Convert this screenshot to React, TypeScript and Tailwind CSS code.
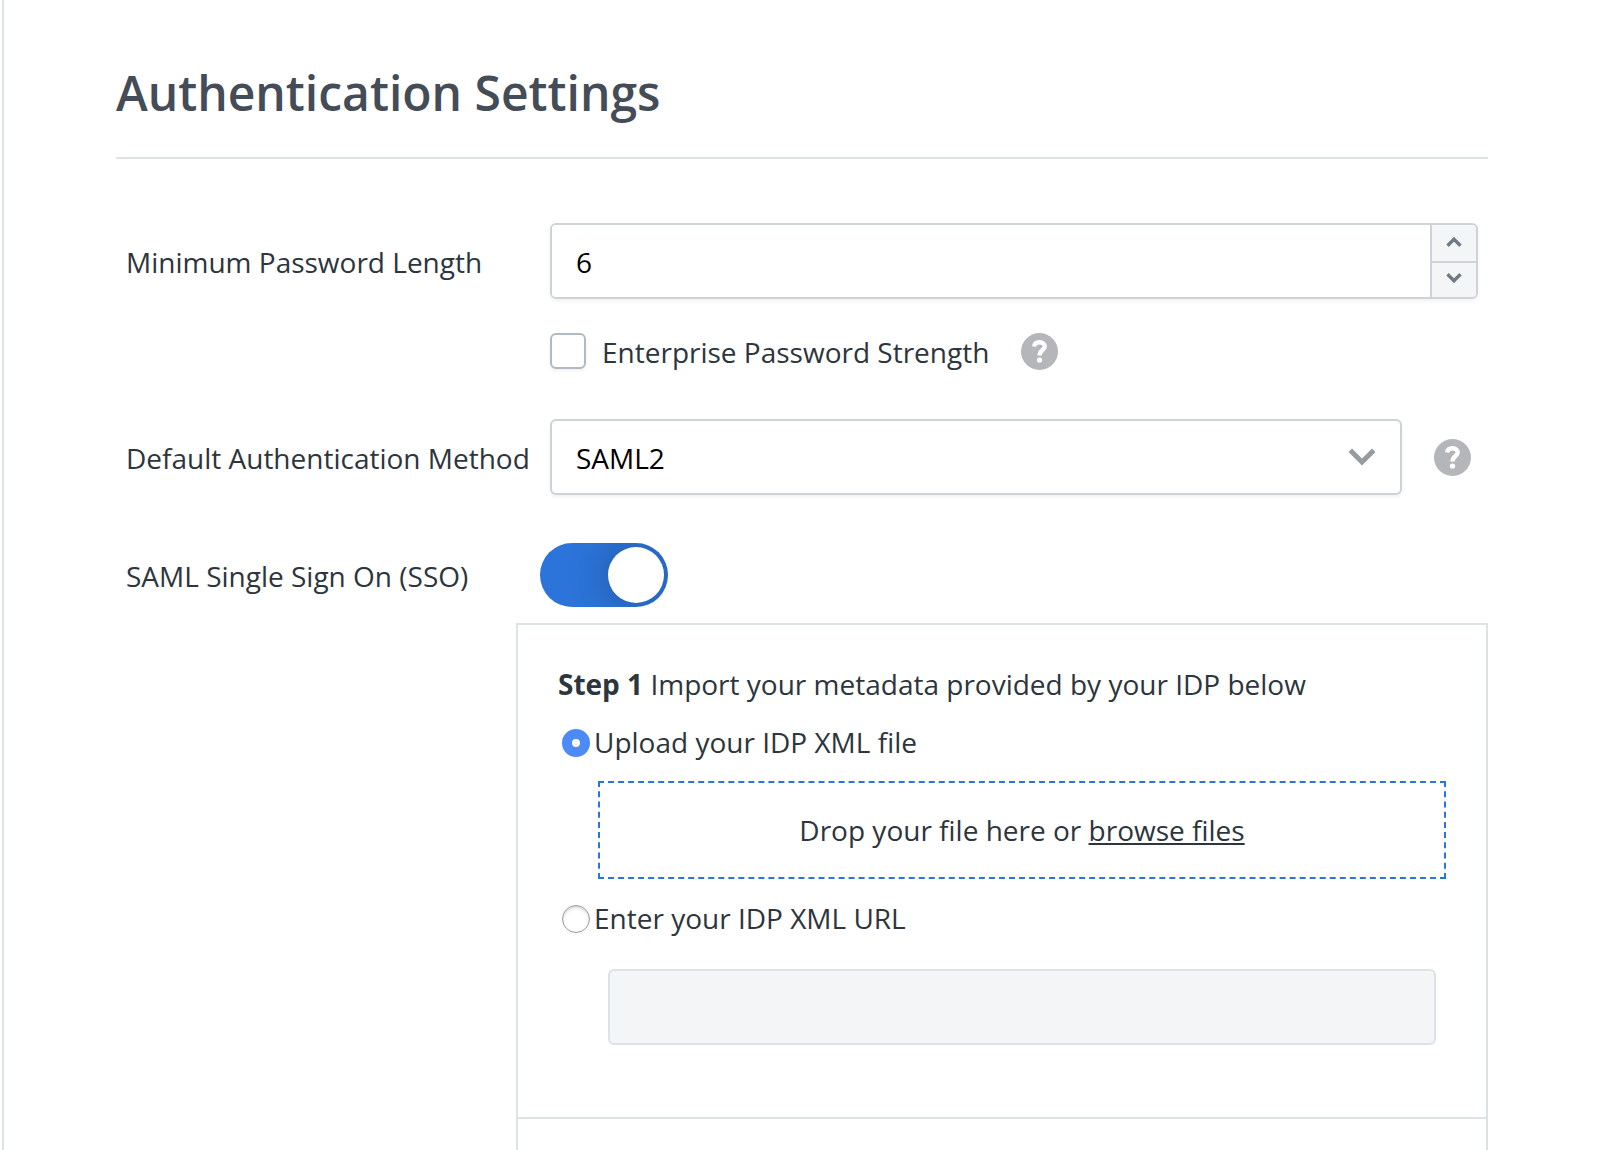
import React, { useState } from 'react';

const HelpButton = ({ label }: { label: string }) => (
  <button type="button" aria-label={label} className="flex w-[52px] shrink-0 justify-center">
    <svg width="37" height="37" viewBox="0 0 37 37" fill="none">
      <circle cx="18.5" cy="18.5" r="18.5" fill="#b5b6ba" />
      <path
        d="M13.2 13.6c.3-2.8 2.5-4.3 5.3-4.3 3 0 5.2 1.6 5.2 4.2 0 3.7-5.1 3.9-5.1 8.9"
        stroke="#fff"
        strokeWidth="4.4"
      />
      <circle cx="18.5" cy="27.1" r="2.7" fill="#fff" />
    </svg>
  </button>
);

const labelClass = 'pt-[2px]';

const radioClass =
  'mt-[2px] ml-1 h-7 w-7 shrink-0 appearance-none rounded-full border border-[#9a9a9a] bg-white shadow-[inset_0_2px_3px_rgba(0,0,0,0.15)] checked:border-[10px] checked:border-[#4c8bf5] checked:shadow-none';

const App = () => {
  const [minLength, setMinLength] = useState(6);
  const [enterprise, setEnterprise] = useState(false);
  const [method, setMethod] = useState('SAML2');
  const [sso, setSso] = useState(true);
  const [source, setSource] = useState('file');

  return (
    <div className="flex min-h-screen bg-white pl-[2px] font-['Open_Sans',sans-serif] text-[28px] leading-10 text-[#2d353d]">
      <main className="flex flex-1 flex-col border-l-2 border-[#dde2e6] px-28 pt-[61px]">
        <h1 className="border-b-2 border-[#dde2e6] pb-8 text-[48px] leading-16 font-semibold text-[#444c57]">
          Authentication Settings
        </h1>

        <div className="mt-16 grid grid-cols-[424px_1fr] items-center px-[10px]">
          <label htmlFor="min-length" className={labelClass}>Minimum Password Length</label>
          <div className="flex h-[76px] overflow-hidden rounded-md border-2 border-[#cdd3d9] shadow-[0_2px_4px_rgba(0,0,0,0.06)]">
            <input
              id="min-length"
              type="text"
              inputMode="numeric"
              value={minLength}
              onChange={(e) => setMinLength(Number(e.target.value) || 0)}
              className="min-w-0 flex-1 bg-white px-6 pt-[2px] text-black outline-none"
            />
            <div className="flex w-[46px] flex-col border-l-2 border-[#cdd3d9] bg-[#f4f5f7] text-[#6f7a84]">
              <button
                type="button"
                aria-label="Increase"
                onClick={() => setMinLength(minLength + 1)}
                className="flex h-[38px] justify-center border-b-2 border-[#cdd3d9] pt-3"
              >
                <svg width="16" height="10" viewBox="0 0 16 10" fill="none" stroke="currentColor" strokeWidth="3.4">
                  <path d="M1.5 8.7 8 2.2l6.5 6.5" />
                </svg>
              </button>
              <button
                type="button"
                aria-label="Decrease"
                onClick={() => setMinLength(Math.max(0, minLength - 1))}
                className="flex flex-1 justify-center pt-[10px]"
              >
                <svg width="16" height="10" viewBox="0 0 16 10" fill="none" stroke="currentColor" strokeWidth="3.4">
                  <path d="M1.5 1.3 8 7.8l6.5-6.5" />
                </svg>
              </button>
            </div>
          </div>

          <div className="col-start-2 mt-[26px] flex h-[52px] items-center">
            <input
              id="enterprise"
              type="checkbox"
              checked={enterprise}
              onChange={(e) => setEnterprise(e.target.checked)}
              className="h-9 w-9 appearance-none rounded-md border-2 border-[#b0bac4] bg-white shadow-[0_2px_3px_rgba(0,0,0,0.06)] checked:bg-[#2c74d9]"
            />
            <label htmlFor="enterprise" className="mr-6 ml-4 pt-[2px]">Enterprise Password Strength</label>
            <HelpButton label="About password strength" />
          </div>
        </div>

        <div className="mt-[42px] grid grid-cols-[424px_1fr] items-center px-[10px]">
          <label htmlFor="method" className={labelClass}>Default Authentication Method</label>
          <div className="flex items-center gap-6">
            <div className="relative flex-1">
              <select
                id="method"
                value={method}
                onChange={(e) => setMethod(e.target.value)}
                className="block h-[76px] w-full appearance-none rounded-md border-2 border-[#cdd3d9] bg-white px-6 pt-[2px] text-black shadow-[0_2px_4px_rgba(0,0,0,0.06)] outline-none"
              >
                <option>SAML2</option>
                <option>Local</option>
                <option>LDAP</option>
              </select>
              <svg
                className="pointer-events-none absolute top-7 right-6 text-[#969b9f]"
                width="32"
                height="20"
                viewBox="0 0 32 20"
                fill="currentColor"
              >
                <path d="M6 1.5 2.5 5 16 18.5 29.5 5 26 1.5 16 11.5z" />
              </svg>
            </div>
            <HelpButton label="About authentication methods" />
          </div>
        </div>

        <div className="mt-12 grid grid-cols-[414px_1fr] items-center px-[10px]">
          <span id="sso-label" className={labelClass}>SAML Single Sign On (SSO)</span>
          <button
            type="button"
            role="switch"
            aria-checked={sso}
            aria-labelledby="sso-label"
            onClick={() => setSso(!sso)}
            className={`flex h-16 w-32 items-center overflow-hidden rounded-full px-1 ${
              sso ? 'justify-end bg-[#2c74d9]' : 'justify-start bg-[#b5b6ba]'
            }`}
          >
            <span className="h-14 w-14 rounded-full bg-white shadow-[0_0_40px_rgba(0,0,0,0.3)]" />
          </button>
        </div>

        <div className="mt-4 ml-[400px] flex flex-1 flex-col border-x-2 border-t-2 border-[#dde2e6]">
          <section className="border-b-2 border-[#dde2e6] px-10 pt-[39px] pb-[72px]">
            <p>
              <strong className="font-bold">Step 1</strong> Import your metadata provided by your IDP below
            </p>

            <div className="mt-[18px] flex items-center gap-1">
              <input
                id="source-file"
                type="radio"
                name="source"
                checked={source === 'file'}
                onChange={() => setSource('file')}
                className={radioClass}
              />
              <label htmlFor="source-file">Upload your IDP XML file</label>
            </div>
            <div className="mt-[19px] ml-10 flex h-[98px] items-center justify-center border-2 border-dashed border-[#2c74d9]">
              <p>
                Drop your file here or <a href="#browse" className="underline">browse files</a>
              </p>
            </div>

            <div className="mt-[19px] flex items-center gap-1">
              <input
                id="source-url"
                type="radio"
                name="source"
                checked={source === 'url'}
                onChange={() => setSource('url')}
                className={radioClass}
              />
              <label htmlFor="source-url">Enter your IDP XML URL</label>
            </div>
            <div className="mt-[31px] mr-[10px] ml-[50px]">
              <input
                type="url"
                aria-label="IDP XML URL"
                disabled={source !== 'url'}
                className="block h-[76px] w-full rounded-md border-2 border-[#dde2e6] bg-white px-6 text-black disabled:bg-[#f4f5f7]"
              />
            </div>
          </section>
        </div>
      </main>
    </div>
  );
};

export default App;
